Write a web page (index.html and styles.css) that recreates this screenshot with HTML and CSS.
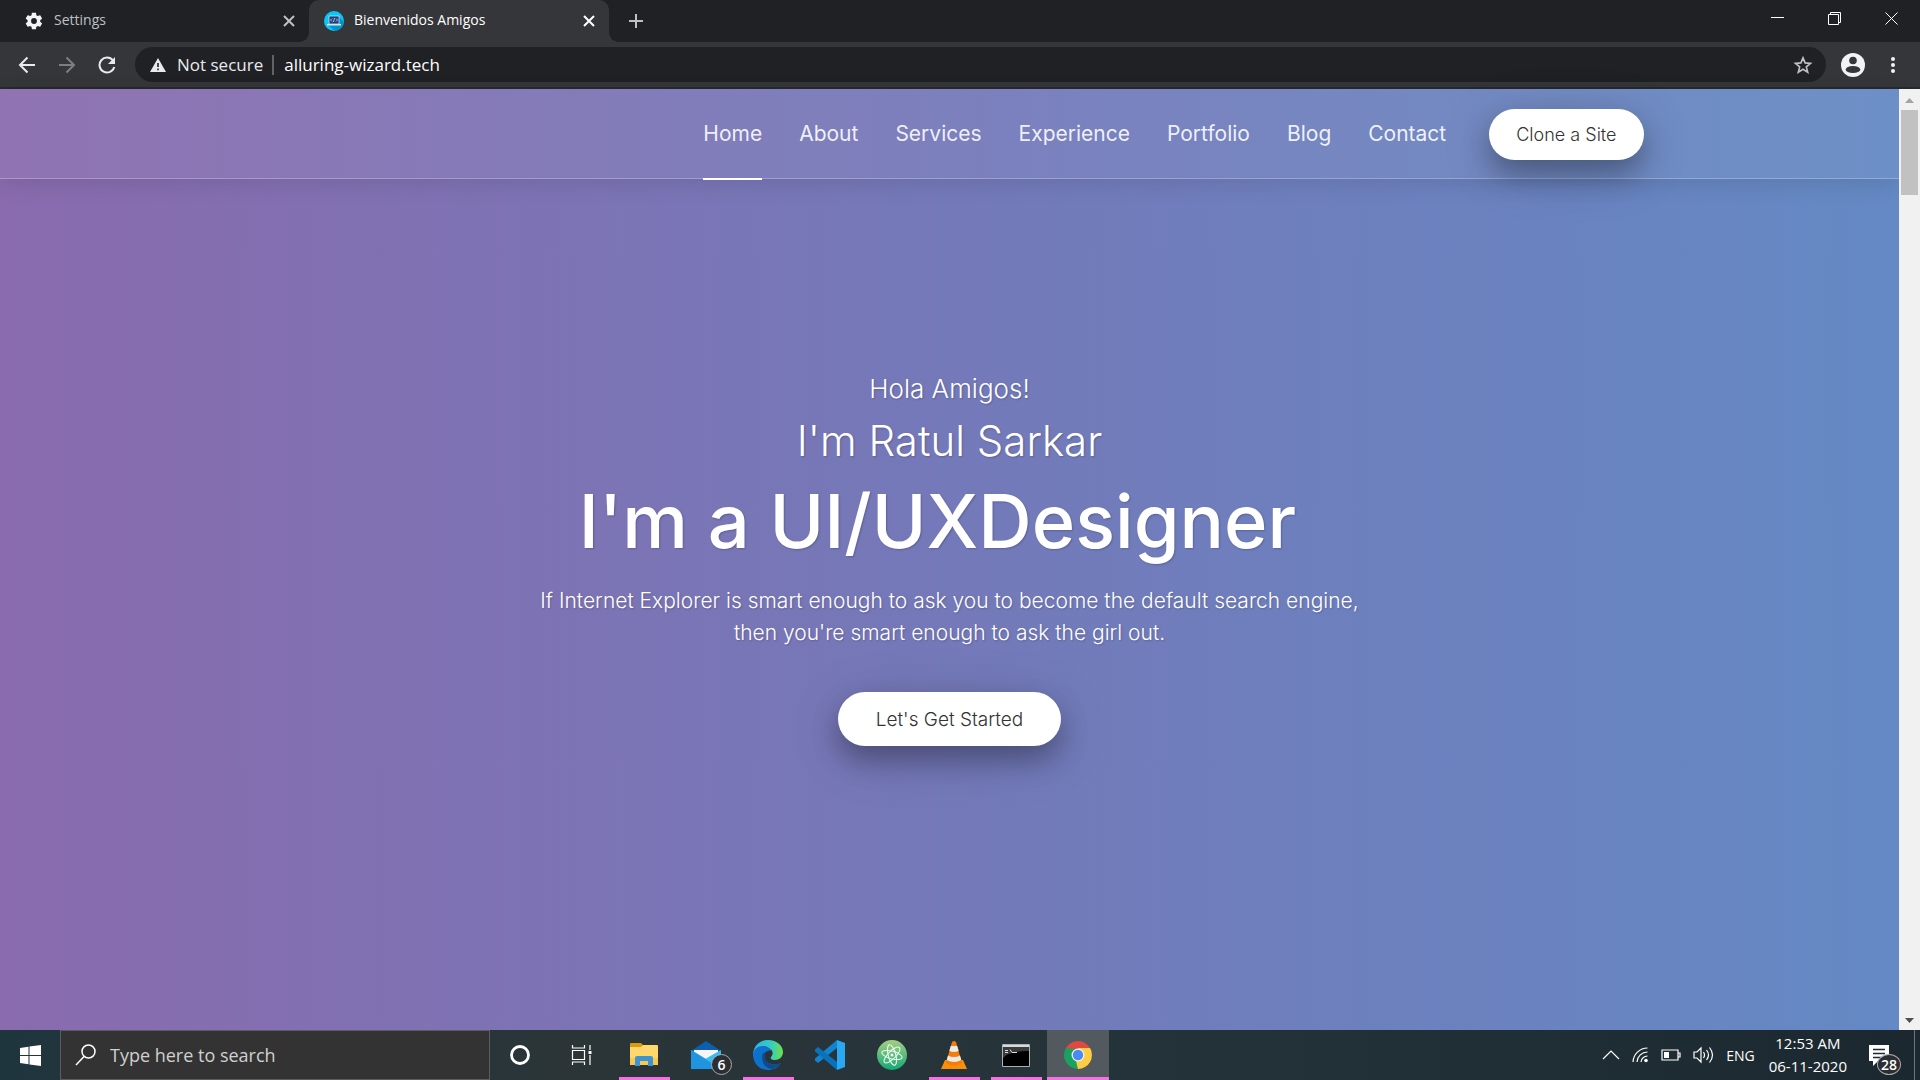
FILE: index.html
```html
<!DOCTYPE html>
<html lang="en">
<head>
<meta charset="utf-8">
<title>Bienvenidos Amigos</title>
<link rel="stylesheet" href="styles.css">
</head>
<body>
<div class="screen">
  <header class="tabstrip">
    <div class="tab">
      <svg class="tab-icon" viewBox="0 0 24 24" fill="#f1f3f4"><path d="M19.4 13c0-.3.1-.6.1-1s0-.7-.1-1l2.100-1.600c.2-.2.200-.4.100-.600l-2-3.500c-.1-.2-.4-.3-.6-.2l-2.500 1c-.5-.4-1.100-.7-1.700-1l-.4-2.600c0-.3-.2-.5-.5-.5h-4c-.2 0-.4.200-.5.500l-.4 2.600c-.6.300-1.200.6-1.700 1l-2.500-1c-.2-.1-.5 0-.6.200l-2 3.500c-.1.200-.1.500.1.600L4.400 11c0 .3-.1.600-.1 1s0 .7.100 1l-2.100 1.600c-.2.200-.2.400-.1.600l2 3.500c.1.200.4.300.6.200l2.500-1c.5.400 1.100.7 1.700 1l.4 2.600c0 .3.200.5.500.5h4c.2 0 .4-.2.500-.5l.4-2.600c.6-.3 1.200-.6 1.700-1l2.500 1c.2.100.5 0 .6-.2l2-3.500c.1-.2.100-.5-.1-.6zM12 15.500a3.500 3.500 0 1 1 0-7 3.500 3.500 0 0 1 0 7z"/></svg>
      <span class="tab-title">Settings</span>
      <button class="tab-close" aria-label="Close Settings"><svg width="14" height="14" viewBox="0 0 14 14"><path d="M2 2l10 10M12 2L2 12"/></svg></button>
    </div>
    <div class="tab tab-active">
      <svg class="tab-icon" viewBox="0 0 20 20"><circle cx="10" cy="10" r="10" fill="#0bc5f8"/><path d="M15 6l5 5a10 10 0 0 1-9 9l-7-6z" fill="#0294c9"/><path d="M5 5h10v8H5z" fill="#1e3f78"/><path d="M3 13h14v1.500H3z" fill="#d7e9f7"/><path d="M5 5h10v8H5zM8 7.500L6.500 9 8 10.500M12 7.500L13.500 9 12 10.500M10.600 7l-1.200 4" fill="none" stroke="#c9dcf0" stroke-width=".8"/></svg>
      <span class="tab-title">Bienvenidos Amigos</span>
      <button class="tab-close" aria-label="Close Bienvenidos Amigos"><svg width="14" height="14" viewBox="0 0 14 14"><path d="M2 2l10 10M12 2L2 12"/></svg></button>
    </div>
    <button class="new-tab" aria-label="New tab"><svg width="16" height="16" viewBox="0 0 16 16"><path d="M8 1v14M1 8h14"/></svg></button>
    <div class="window-controls">
      <button aria-label="Minimize"><svg width="14" height="14" viewBox="0 0 14 14"><path d="M0 5.500h13"/></svg></button>
      <button aria-label="Restore"><svg width="14" height="14" viewBox="0 0 14 14"><path d="M.5 2.500h10v10H.5zM2.500 2.500v-2h10v10h-2"/></svg></button>
      <button aria-label="Close"><svg width="14" height="14" viewBox="0 0 14 14"><path d="M.5.5l12 12M12.500.5l-12 12"/></svg></button>
    </div>
  </header>

  <div class="toolbar">
    <button class="tool" aria-label="Back"><svg width="18" height="18" viewBox="0 0 18 18"><path d="M17 9H2M9.500 1.500L2 9l7.500 7.500"/></svg></button>
    <button class="tool tool-off" aria-label="Forward" disabled><svg width="18" height="18" viewBox="0 0 18 18"><path d="M1 9h15M8.500 1.500L16 9l-7.500 7.500"/></svg></button>
    <button class="tool" aria-label="Reload"><svg width="18" height="18" viewBox="0 0 18 18"><path d="M15 4.500A7.500 7.500 0 1 0 16.300 11"/><path d="M17 1v7h-7z" fill="#e8eaed" stroke="none"/></svg></button>
    <div class="omnibox">
      <svg width="16" height="14" viewBox="0 0 16 14"><path d="M8 0l8 14H0z" fill="#e8eaed"/><path d="M8 5v4M8 10.500v1.700" stroke="#202124" stroke-width="1.600"/></svg>
      <span class="not-secure">Not secure</span>
      <input class="address" type="text" value="alluring-wizard.tech" aria-label="Address">
      <button class="star" aria-label="Bookmark this page"><svg width="20" height="20" viewBox="0 0 24 24"><path d="M12 3.500l2.500 6 6.500.500-5 4.300 1.600 6.400L12 17.200l-5.600 3.500L8 14.300 3 10l6.500-.5z"/></svg></button>
    </div>
    <button class="profile" aria-label="Profile"><svg width="24" height="24" viewBox="0 0 24 24"><circle cx="12" cy="12" r="12" fill="#f1f3f4"/><circle cx="12" cy="7.500" r="3.800" fill="#35363a"/><ellipse cx="12" cy="16.500" rx="7.300" ry="3.600" fill="#35363a"/></svg></button>
    <button class="menu" aria-label="Menu"><svg width="6" height="18" viewBox="0 0 6 18" fill="#f1f3f4"><circle cx="3" cy="3" r="2"/><circle cx="3" cy="9" r="2"/><circle cx="3" cy="15" r="2"/></svg></button>
  </div>

  <div class="viewport">
    <div class="site">
      <div class="site-header">
        <nav class="nav">
          <a class="nav-link nav-current" href="#home">Home</a>
          <a class="nav-link" href="#about">About</a>
          <a class="nav-link" href="#services">Services</a>
          <a class="nav-link" href="#experience">Experience</a>
          <a class="nav-link" href="#portfolio">Portfolio</a>
          <a class="nav-link" href="#blog">Blog</a>
          <a class="nav-link" href="#contact">Contact</a>
          <button class="pill pill-small">Clone a Site</button>
        </nav>
      </div>
      <main class="hero">
        <p class="hello">Hola Amigos!</p>
        <h2 class="name">I'm Ratul Sarkar</h2>
        <h1 class="role">I'm a UI/UXDesigner</h1>
        <p class="quote">If Internet Explorer is smart enough to ask you to become the default search engine,<br>then you're smart enough to ask the girl out.</p>
        <button class="pill">Let's Get Started</button>
      </main>
    </div>
    <div class="scrollbar">
      <svg width="9" height="5" viewBox="0 0 9 5"><path d="M0 5l4.500-5L9 5z" fill="#a3a3a3"/></svg>
      <div class="thumb"></div>
      <svg width="9" height="5" viewBox="0 0 9 5"><path d="M0 0l4.500 5L9 0z" fill="#505050"/></svg>
    </div>
  </div>

  <footer class="taskbar">
    <button class="start" aria-label="Start"><svg width="21" height="21" viewBox="0 0 21 21" fill="#fff"><path d="M0 3l8.500-1.200V10H0zM9.500 1.600L21 0v10H9.500zM0 11h8.500v8.200L0 18zM9.500 11H21v10L9.500 19.400z"/></svg></button>
    <div class="search">
      <svg width="22" height="22" viewBox="0 0 22 22"><circle cx="13.500" cy="7.500" r="6.500"/><path d="M9 12.500L1 21"/></svg>
      <input class="search-input" type="text" placeholder="Type here to search" aria-label="Type here to search">
    </div>
    <div class="apps">
      <button class="app" aria-label="Cortana"><svg width="22" height="22" viewBox="0 0 22 22"><circle cx="11" cy="11" r="8.500" fill="none" stroke="#fff" stroke-width="2.800"/></svg></button>
      <button class="app" aria-label="Task View"><svg width="22" height="20" viewBox="0 0 22 20" fill="none" stroke="#fff" stroke-width="1.200"><path d="M1.500 5.500h12v9h-12zM1.500 0v3h12V0M1.500 20v-3h12v3M19 0v5M19 10v10"/><path d="M17.500 6h3v3h-3z" fill="#fff" stroke="none"/></svg></button>
      <button class="app app-open" aria-label="File Explorer"><svg width="28" height="24" viewBox="0 0 28 24"><path d="M0 1q0-1 1-1h10l2 2-1 3H0z" fill="#dc9b0b"/><path d="M0 4h11l2-2h14q1 0 1 1v19H0z" fill="#ffd76a"/><path d="M0 15h28v7H0z" fill="#fbc84b"/><path d="M5 23v-8q0-2 2-2h14q2 0 2 2v8h-5v-5h-8v5z" fill="#3c94d2"/></svg></button>
      <button class="app" aria-label="Mail"><svg width="30" height="28" viewBox="0 0 30 28"><path d="M0 10L15 0l15 10v6H0z" fill="#0c5fae"/><path d="M3 9h24v6L15 20 3 14z" fill="#f5f5f5"/><path d="M0 9l15 9L0 28z" fill="#2aa3e6"/><path d="M30 9v19H0v-2z" fill="#35bdf2"/><path d="M0 28V9l15 9.500L30 28z" fill="#1f95df"/></svg><span class="badge">6</span></button>
      <button class="app app-open" aria-label="Edge"><svg width="30" height="30" viewBox="0 0 30 30"><defs><linearGradient id="eg"><stop offset="0" stop-color="#2bb3ea"/><stop offset=".6" stop-color="#37cbc2"/><stop offset="1" stop-color="#6ee248"/></linearGradient></defs><path d="M0 14C1 5 7 0 15 0c9 0 15 6 15 12 0 5-4 8-8 8-3 0-5-1-4-3 4-5 0-9-5-9-6 0-10 4-13 9z" fill="url(#eg)"/><path d="M0 14c1-5 5-8 10-8 4 0 7 2 8 5-5-1-8 3-6 8 2 5 9 7 16 4-3 5-8 7-13 7C6 30 0 23 0 14z" fill="#0c72cc"/><path d="M10 13c-3 8 2 16 9 16 4-1 7-3 9-6-7 3-14 1-16-4-1-3 0-5 1-7z" fill="#114a8c"/></svg></button>
      <button class="app" aria-label="Visual Studio Code"><svg width="30" height="30" viewBox="0 0 30 30"><path d="M22 0l8 3v24l-8 3z" fill="#2aa9f2"/><path d="M22 0v8L3 23 0 20.500v-2z" fill="#1283cf"/><path d="M22 30v-8L3 7 0 9.500v2z" fill="#0a72bb"/></svg></button>
      <button class="app" aria-label="Atom"><svg width="30" height="30" viewBox="0 0 30 30"><defs><linearGradient id="at" x2="0" y2="1"><stop offset="0" stop-color="#a5cf80"/><stop offset="1" stop-color="#15a878"/></linearGradient></defs><circle cx="15" cy="15" r="15" fill="url(#at)"/><g fill="none" stroke="#e8f8ee" stroke-width="1.100"><ellipse cx="15" cy="15" rx="10.500" ry="3.800" transform="rotate(15 15 15)"/><ellipse cx="15" cy="15" rx="10.500" ry="3.800" transform="rotate(75 15 15)"/><ellipse cx="15" cy="15" rx="10.500" ry="3.800" transform="rotate(135 15 15)"/></g><circle cx="15" cy="15" r="1.500" fill="#fff"/></svg></button>
      <button class="app app-open" aria-label="VLC"><svg width="26" height="28" viewBox="0 0 26 28"><path d="M4 19h18l4 9H0z" fill="#f78f08"/><path d="M11 1q2-2 4 0l6 21q-8 5-16 0z" fill="#f47c0a"/><path d="M9.800 5h6.400l1.500 5q-4.700 2-9.400 0zM7 14.500q6 3 12 0l1.300 4.500q-7 4-14.600 0z" fill="#eeeae6"/></svg></button>
      <button class="app app-open" aria-label="Command Prompt"><svg width="28" height="23" viewBox="0 0 28 23"><path d="M.5.500h27v22H.5z" fill="#000" stroke="#aab2b8"/><path d="M1 1h26v2H1z" fill="#d3dbe1"/><path d="M1 3h26v4q-20 0-26 7z" fill="#3b3b3b"/><path d="M3 6.500h3M3 8.500h3M8 5.500l2 3h5" stroke="#ddd" fill="none"/></svg></button>
      <button class="app app-open app-current" aria-label="Chrome"><svg width="28" height="28" viewBox="0 0 28 28"><path d="M14 14L1.900 7A14 14 0 0 1 26.100 7z" fill="#dd4b3e"/><path d="M14 14L26.100 7A14 14 0 0 1 14 28z" fill="#ffcd41"/><path d="M14 14V28A14 14 0 0 1 1.900 7z" fill="#1aa25f"/><path d="M14 7h12.100L20 17.500z" fill="#ffcd41"/><path d="M8 17.500L1.900 7l9 1z" fill="#1aa25f"/><path d="M20 17.500L14 28l-2-8z" fill="#ffcd41"/><circle cx="14" cy="14" r="6.500" fill="#f1f1f1"/><circle cx="14" cy="14" r="5.200" fill="#4a8af4"/></svg></button>
    </div>
    <div class="tray">
      <svg width="18" height="10" viewBox="0 0 18 10"><path d="M1 9l8-8 8 8"/></svg>
      <svg width="17" height="16" viewBox="0 0 17 16"><path d="M1 15A14.500 14.500 0 0 1 15.500 1M5 15A10.500 10.500 0 0 1 15.500 5M9 15a6.500 6.500 0 0 1 6.500-6"/><circle cx="14" cy="13.500" r="1.800" fill="#fff" stroke="none"/></svg>
      <svg width="20" height="12" viewBox="0 0 20 12"><path d="M1 1h16v10H1zM17 4h2v4h-2"/><path d="M3 3h5v6H3z" fill="#fff" stroke="none"/></svg>
      <svg width="21" height="18" viewBox="0 0 21 18"><path d="M1 6h3l4-4v14l-4-4H1zM10.500 6q2 3 0 6M13.500 4q4 5 0 10M16.500 1.500q6 7.500 0 15"/></svg>
      <span class="lang">ENG</span>
      <div class="clock"><span>12:53 AM</span><span>06-11-2020</span></div>
      <button class="notes" aria-label="Notifications"><svg width="20" height="21" viewBox="0 0 20 21"><path d="M0 0h20v16H9l-5 5v-5H0z" fill="#fff" stroke="none"/><path d="M4 4.500h12M4 8.500h12M4 12.500h8" stroke="#1e2b32" stroke-width="1.500"/></svg><span class="badge">28</span></button>
    </div>
  </footer>
</div>
</body>
</html>
```
FILE: styles.css
```css
* { box-sizing: border-box; }

body {
  margin: 0;
  font-family: "Open Sans", "Noto Sans", sans-serif;
  color: #fff;
}

button {
  padding: 0;
  border: 0;
  background: none;
  color: inherit;
  font: inherit;
}

svg { display: block; flex: none; }

.screen {
  display: flex;
  flex-direction: column;
  height: 100vh;
  overflow: hidden;
}

/* Browser tabs */
.tabstrip {
  display: flex;
  height: 42px;
  padding-left: 9px;
  background: #202124;
}

.tab {
  position: relative;
  display: flex;
  align-items: center;
  width: 300px;
  padding: 0 13px 0 15px;
  color: #bdc1c6;
  font-size: 14px;
}

.tab-active {
  border-radius: 10px 10px 0 0;
  background: #35363a;
  color: #fff;
}

.tab-active::before,
.tab-active::after {
  content: "";
  position: absolute;
  bottom: 0;
  width: 10px;
  height: 10px;
}

.tab-active::before { left: -10px; background: radial-gradient(circle at 0 0, transparent 10px, #35363a 10px); }
.tab-active::after { right: -10px; background: radial-gradient(circle at 100% 0, transparent 10px, #35363a 10px); }

.tab-icon { width: 20px; height: 20px; }
.tab-title { flex: 1; padding-left: 10px; line-height: 40px; padding-bottom: 2px; }

.tab-close svg,
.new-tab svg {
  fill: none;
  stroke: currentColor;
  stroke-width: 2;
}

.new-tab { padding: 0 19px; color: #bdc1c6; }

.window-controls { display: flex; margin-left: auto; }
.window-controls button { display: grid; place-items: center; width: 57px; height: 37px; }
.window-controls svg { fill: none; stroke: #fff; }

/* Address bar */
.toolbar {
  display: flex;
  align-items: center;
  height: 47px;
  padding: 0 15px 0 7px;
  border-bottom: 2px solid #28292c;
  background: #35363a;
}

.tool { display: grid; place-items: center; width: 40px; }
.tool svg { fill: none; stroke: #e8eaed; stroke-width: 2; }
.tool-off { opacity: .4; }

.omnibox {
  flex: 1;
  display: flex;
  align-items: center;
  height: 35px;
  margin-left: 8px;
  padding: 0 13px 0 15px;
  border-radius: 18px;
  background: #202124;
  font-size: 17px;
}

.not-secure {
  margin-left: 11px;
  padding-right: 9px;
  border-right: 2px solid #5f6368;
  line-height: 20px;
  color: #e8eaed;
}

.address {
  flex: 1;
  padding: 0 0 0 10px;
  border: 0;
  background: none;
  color: #fff;
  font: inherit;
}

.star svg { fill: none; stroke: #bdc1c6; stroke-width: 2; }
.profile { margin-left: 15px; }
.menu { padding: 0 9px 0 25px; }

/* Page area */
.viewport { flex: 1; display: flex; min-height: 0; }

.site {
  flex: 1;
  background: linear-gradient(to right, #896bae, #7479b9 50%, #6489c4);
  font-family: Inter, "Open Sans", sans-serif;
}

.site-header {
  height: 90px;
  border-bottom: 1px solid rgba(255, 255, 255, .25);
  background: rgba(255, 255, 255, .06);
  box-shadow: 0 5px 20px rgba(0, 0, 0, .1);
}

.nav {
  display: flex;
  align-items: center;
  justify-content: flex-end;
  gap: 37px;
  max-width: 1388px;
  height: 90px;
  margin: 0 auto;
}

.nav-link {
  margin-top: 2px;
  border-bottom: 2px solid transparent;
  color: rgba(255, 255, 255, .9);
  font-size: 21px;
  line-height: 88px;
  text-decoration: none;
}

.nav-current { border-color: #fff; }

.pill {
  height: 54px;
  padding: 0 38px;
  border-radius: 27px;
  background: #fff;
  box-shadow: 0 14px 28px rgba(0, 0, 0, .3), 0 10px 60px rgba(0, 0, 0, .12);
  color: #333;
  font-size: 19px;
  font-weight: 300;
}

.pill-small {
  height: 51px;
  margin-left: 6px;
  padding: 0 27px;
  font-size: 18px;
}

.hero {
  display: flex;
  flex-direction: column;
  align-items: center;
  padding-top: 190px;
  text-align: center;
  text-shadow: 1px 1px 2px rgba(0, 0, 0, .2);
}

.hello { margin: 0; font-size: 26px; line-height: 40px; font-weight: 300; }
.name { margin: 0; font-size: 42px; line-height: 64px; font-weight: 300; }
.role { margin: 0; padding-right: 24px; font-size: 74px; line-height: 96px; font-weight: 500; }
.quote { margin: 16px 0 43px; font-size: 21px; line-height: 32px; font-weight: 300; }

.scrollbar {
  display: flex;
  flex-direction: column;
  align-items: center;
  width: 21px;
  padding: 9px 0 7px;
  background: #f1f1f1;
}

.thumb { width: 17px; height: 85px; margin: 7px 0 auto; background: #c1c1c1; }

/* Desktop taskbar */
.taskbar {
  display: flex;
  align-items: stretch;
  height: 50px;
  background: linear-gradient(to right, #1f353d, #2b3538 30%, #24333a 60%, #1b2830);
}

.start { display: grid; place-items: center; width: 60px; }

.search {
  display: flex;
  align-items: center;
  width: 430px;
  padding: 0 14px;
  border: 1px solid #5c5c5c;
  background: #333;
}

.search svg { fill: none; stroke: #fff; stroke-width: 1.500; }

.search-input {
  flex: 1;
  min-width: 0;
  padding: 0 0 0 13px;
  border: 0;
  background: none;
  color: #fff;
  font: inherit;
  font-size: 18px;
}

.search-input::placeholder { color: #d0d0d0; }

.apps { display: flex; margin-left: -1px; }
.app { position: relative; display: grid; place-items: center; width: 62px; }
.app-open { background: linear-gradient(#f571e3, #f571e3) center bottom / 51px 3px no-repeat; }
.app-current { background-color: #525a5f; background-size: 100% 3px; }

.badge {
  position: absolute;
  right: 5px;
  bottom: 5px;
  display: grid;
  place-items: center;
  width: 21px;
  height: 21px;
  border: 1px solid #aaa;
  border-radius: 50%;
  background: #2b2f33;
  font-size: 14px;
  font-weight: 600;
  line-height: 18px;
}

.tray { display: flex; align-items: center; gap: 12px; margin-left: auto; padding-right: 5px; }
.tray svg { fill: none; stroke: #fff; stroke-width: 1.200; }
.lang { font-size: 14px; }
.clock { display: flex; flex-direction: column; align-items: center; margin-left: 2px; font-size: 15px; line-height: 23px; }

.notes {
  position: relative;
  display: flex;
  align-items: center;
  align-self: stretch;
  width: 46px;
  margin-left: 10px;
  border-right: 1px solid #6b757b;
}

.notes .badge { right: 13px; width: 24px; }
```
